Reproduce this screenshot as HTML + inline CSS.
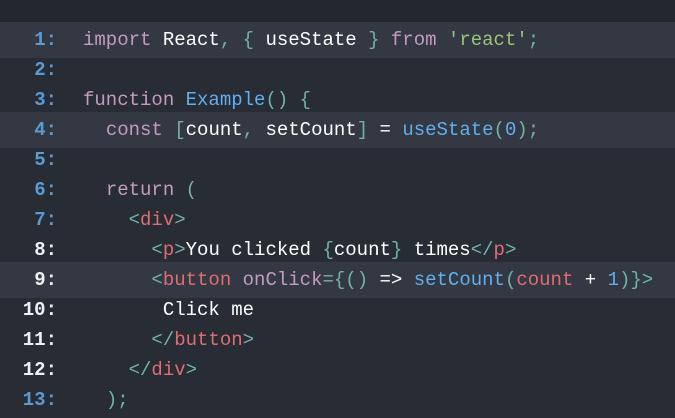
<!DOCTYPE html>
<html><head><meta charset="utf-8"><style>
html,body{margin:0;padding:0;}
body{width:675px;height:417px;background:#282c34;overflow:hidden;position:relative;font-family:"Liberation Mono",monospace;font-size:19px;}
.top{position:absolute;left:0;top:0;width:675px;height:22px;background:#23272e;}
.l{position:absolute;left:0;width:675px;height:36px;line-height:36px;white-space:pre;color:#e6e6e6;}
.hl{background:#333842;}
.n{position:absolute;right:618px;color:#5a9bd5;font-weight:bold;}
.n.w{color:#eef0f3;}
.c{position:absolute;left:83px;}
.k{color:#c49ac0}.f{color:#61afef}.p{color:#6fb3a6}.t{color:#e06c75}.s{color:#98c379}.i{color:#fff;}.a{color:#c49ac0}.num{color:#61afef}
</style></head><body>
<div class="top"></div>
<div class="l hl" style="top:22px"><span class="n">1:</span><span class="c"><span class="k">import</span> <span class="i">React</span><span class="p">,</span> <span class="p">{</span> <span class="i">useState</span> <span class="p">}</span> <span class="k">from</span> <span class="s">'react'</span><span class="p">;</span></span></div>
<div class="l" style="top:52px"><span class="n">2:</span></div>
<div class="l" style="top:82px"><span class="n">3:</span><span class="c"><span class="k">function</span> <span class="f">Example</span><span class="p">()</span> <span class="p">{</span></span></div>
<div class="l hl" style="top:112px"><span class="n">4:</span><span class="c">  <span class="k">const</span> <span class="p">[</span><span class="i">count</span><span class="p">,</span> <span class="i">setCount</span><span class="p">]</span> <span class="i">=</span> <span class="f">useState</span><span class="p">(</span><span class="num">0</span><span class="p">);</span></span></div>
<div class="l" style="top:142px"><span class="n">5:</span></div>
<div class="l" style="top:172px"><span class="n">6:</span><span class="c">  <span class="k">return</span> <span class="p">(</span></span></div>
<div class="l" style="top:202px"><span class="n">7:</span><span class="c">    <span class="p">&lt;</span><span class="t">div</span><span class="p">&gt;</span></span></div>
<div class="l" style="top:232px"><span class="n w">8:</span><span class="c">      <span class="p">&lt;</span><span class="t">p</span><span class="p">&gt;</span><span class="i">You clicked </span><span class="p">{</span><span class="i">count</span><span class="p">}</span><span class="i"> times</span><span class="p">&lt;/</span><span class="t">p</span><span class="p">&gt;</span></span></div>
<div class="l hl" style="top:262px"><span class="n w">9:</span><span class="c">      <span class="p">&lt;</span><span class="t">button</span> <span class="a">onClick</span><span class="p">={()</span> <span class="i">=&gt;</span> <span class="f">setCount</span><span class="p">(</span><span class="t">count</span> <span class="i">+</span> <span class="num">1</span><span class="p">)}&gt;</span></span></div>
<div class="l" style="top:292px"><span class="n w">10:</span><span class="c">       <span class="i">Click me</span></span></div>
<div class="l" style="top:322px"><span class="n w">11:</span><span class="c">      <span class="p">&lt;/</span><span class="t">button</span><span class="p">&gt;</span></span></div>
<div class="l" style="top:352px"><span class="n w">12:</span><span class="c">    <span class="p">&lt;/</span><span class="t">div</span><span class="p">&gt;</span></span></div>
<div class="l" style="top:382px"><span class="n">13:</span><span class="c">  <span class="p">);</span></span></div>
</body></html>
